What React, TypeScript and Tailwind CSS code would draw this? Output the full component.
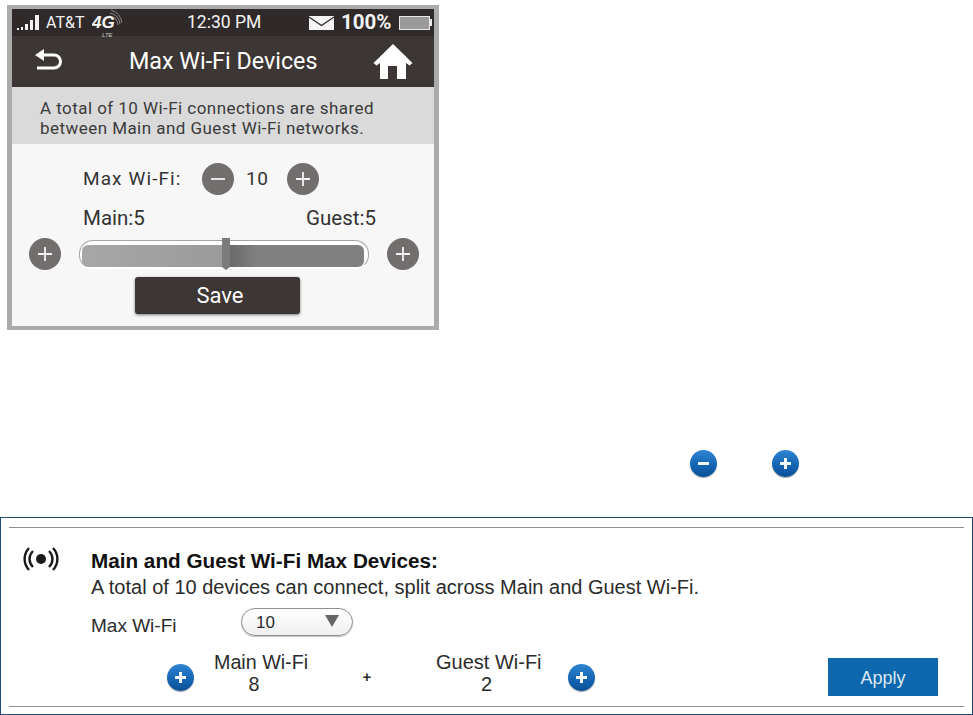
import React from 'react';

function RoundButton({ minus = false }: { minus?: boolean }) {
  return (
    <span className="flex h-[32px] w-[32px] shrink-0 items-center justify-center rounded-full bg-[#716e6d]">
      <svg width="16" height="16" viewBox="0 0 16 16">
        <path d={minus ? 'M1 8h14' : 'M1 8h14M8 1v14'} stroke="#f4f4f4" strokeWidth="1.8" fill="none" />
      </svg>
    </span>
  );
}

function BlueButton({ minus = false }: { minus?: boolean }) {
  return (
    <span className="flex h-[27px] w-[27px] shrink-0 items-center justify-center rounded-full bg-[linear-gradient(180deg,#2f86d3_0%,#1565b4_55%,#0b4f96_100%)] shadow-[0_1px_1px_rgba(0,0,0,0.35)]">
      <svg width="13" height="13" viewBox="0 0 13 13">
        <path d={minus ? 'M1 6.5h11' : 'M1 6.5h11M6.5 1v11'} stroke="#f2f7fc" strokeWidth="3" fill="none" />
      </svg>
    </span>
  );
}

function StatusBar() {
  return (
    <div className="flex h-[27px] items-center bg-[#2f2a29] pl-[5px] font-['Roboto',sans-serif] text-[#f2f2f2]">
      {/* signal */}
      <svg width="24" height="18" viewBox="0 0 24 18" className="shrink-0">
        <rect x="0" y="14" width="2" height="2" fill="#f2f2f2" />
        <rect x="4" y="13" width="2" height="3" fill="#f2f2f2" />
        <rect x="8" y="10" width="3" height="6" fill="#f2f2f2" />
        <rect x="13" y="6" width="3" height="10" fill="#f2f2f2" />
        <rect x="18" y="1" width="4" height="15" fill="#f2f2f2" />
      </svg>
      <span className="ml-[5px] w-[46px] shrink-0 text-[16px] leading-none">AT&amp;T</span>
      {/* 4G LTE */}
      <svg width="30" height="28" viewBox="0 0 30 28" className="shrink-0">
        <path d="M17 7a9 9 0 0 1 9 9M18 4a12 12 0 0 1 10 11M19 1a15 15 0 0 1 11 13" stroke="#8a8685" strokeWidth="1" fill="none" />
        <text x="0" y="19" fontFamily="Liberation Sans" fontWeight="700" fontStyle="italic" fontSize="17" fill="#f5f5f5">4G</text>
        <text x="10" y="28" fontFamily="Liberation Sans" fontStyle="italic" fontSize="6" fill="#d0d0d0">LTE</text>
      </svg>
      <span className="ml-[65px] w-[122px] shrink-0 text-[17.500px] leading-none">12:30 PM</span>
      <svg width="25" height="14" viewBox="0 0 25 14" className="shrink-0">
        <rect width="25" height="14" fill="#f5f5f5" />
        <path d="M0 1l12.500 8.500L25 1" stroke="#2f2a29" strokeWidth="1.300" fill="none" />
      </svg>
      <span className="ml-[7px] w-[58px] shrink-0 text-[20.500px] leading-none font-bold">100%</span>
      <span className="flex h-[14px] w-[31px] shrink-0 border border-[#e8e8e8] bg-[#9a9a9a]" />
      <span className="h-[7px] w-[2px] bg-[#e8e8e8]" />
    </div>
  );
}

function TitleBar() {
  return (
    <div className="flex h-[51px] items-center bg-[#3c3634] font-['Roboto',sans-serif] text-white">
      <svg width="30" height="26" viewBox="0 0 30 26" className="ml-[21px] shrink-0">
        <path d="M8 6h13a6.500 6.500 0 0 1 0 13H4" stroke="#fff" strokeWidth="3" fill="none" />
        <path d="M11 0v12L2 6z" fill="#fff" />
      </svg>
      <span className="ml-[66px] w-[244px] shrink-0 text-[23.300px] leading-none">Max Wi-Fi Devices</span>
      <svg width="40" height="36" viewBox="0 0 40 36" className="shrink-0">
        <path d="M20 0L39.500 19l-3 2.500L33 19v16H24V22h-9v13H7V19l-3.500 2.500-3-2.500z" fill="#fff" />
      </svg>
    </div>
  );
}

function Slider() {
  return (
    <div className="relative ml-[18px] flex h-[29px] w-[290px] items-center rounded-[14px] border border-[#a5a5a5] border-b-transparent bg-white pl-[2px]">
      <div className="mt-[4px] flex h-[22px] w-[282px] overflow-hidden rounded-[6px]">
        <div className="w-[145px] bg-[linear-gradient(90deg,#a6a7a6,#999a99)]" />
        <div className="flex-1 bg-[linear-gradient(90deg,#686868,#808080_22%)]" />
      </div>
      <svg width="8" height="32" viewBox="0 0 8 32" className="absolute left-[142px] top-[-3px]">
        <path d="M0 0h8v29l-4 3-4-3z" fill="#7b7b7b" />
      </svg>
    </div>
  );
}

function Phone() {
  return (
    <div className="ml-[7px] mt-[5px] h-[325px] w-[432px] border-x-[5px] border-y-[4px] border-x-[#ababab] border-y-[#ababab] bg-[#f7f7f7] font-['Roboto',sans-serif] text-[#333]">
      <StatusBar />
      <TitleBar />
      <div className="h-[57px] bg-[#dadada] pl-[28px] pt-[11px] text-[17px] leading-[20px] tracking-[0.45px] text-[#3a3a3a]">
        <div>A total of 10 Wi-Fi connections are shared</div>
        <div>between Main and Guest Wi-Fi networks.</div>
      </div>
      <div className="flex h-[181px] flex-col">
        <div className="ml-[71px] mt-[19px] flex h-[32px] items-center text-[19px] tracking-[1.1px]">
          <span className="w-[119px]">Max Wi-Fi:</span>
          <RoundButton minus />
          <span className="w-[53px] pl-[12px] tracking-[0.6px]">10</span>
          <RoundButton />
        </div>
        <div className="ml-[71px] mt-[11px] flex w-[293px] justify-between text-[20.500px] leading-[24px]">
          <span>Main:5</span>
          <span>Guest:5</span>
        </div>
        <div className="ml-[17px] mt-[8px] flex h-[32px] items-center">
          <RoundButton />
          <Slider />
          <span className="ml-[18px]">
            <RoundButton />
          </span>
        </div>
        <button className="ml-[123px] mt-[7px] h-[37px] w-[165px] rounded-[3px] bg-[#3c3634] pl-[5px] text-[22px] text-white shadow-[0_1px_3px_rgba(0,0,0,0.5)]">
          Save
        </button>
      </div>
    </div>
  );
}

function Panel() {
  return (
    <div className="mt-[40px] h-[198px] w-[973px] border-[1.500px] border-[#1f4a75] bg-white px-[8px] pt-[9px] font-['Liberation_Sans',sans-serif] text-[#2b2b2b]">
      <div className="h-[180px] border-y border-y-[#8d8d8d]">
        <div className="flex pt-[19px]">
          <svg width="38" height="26" viewBox="0 0 38 26" className="ml-[13px] shrink-0">
            <circle cx="19" cy="12" r="5" fill="#1a1a1a" />
            <path d="M11 4a11 11 0 0 0 0 16M27 4a11 11 0 0 1 0 16M7 1a16 16 0 0 0 0 22M31 1a16 16 0 0 1 0 22" stroke="#1a1a1a" strokeWidth="2.400" fill="none" />
          </svg>
          <div className="ml-[31px] pt-[3px]">
            <div className="text-[20.700px] leading-[22px] font-bold text-[#111]">Main and Guest Wi-Fi Max Devices:</div>
            <div className="mt-[4px] text-[20px] leading-[22px]">A total of 10 devices can connect, split across Main and Guest Wi-Fi.</div>
          </div>
        </div>
        <div className="ml-[82px] mt-[9px] flex items-center">
          <span className="w-[150px] pt-[8px] text-[19px] leading-[22px]">Max Wi-Fi</span>
          <div className="flex h-[28px] w-[112px] items-center justify-between rounded-[14px] border border-[#8f8f8f] bg-[linear-gradient(180deg,#fff,#f0f0f0)] pl-[14px] pr-[13px] pt-[2px] text-[17px] shadow-[0_1px_1px_rgba(0,0,0,0.25)]">
            <span>10</span>
            <svg width="14" height="12" viewBox="0 0 14 12" className="mb-[4px]">
              <path d="M0 0h14L7 12z" fill="#666" />
            </svg>
          </div>
        </div>
        <div className="ml-[158px] mt-[21px] flex h-[38px] items-center">
          <BlueButton />
          <div className="-mt-[8px] ml-[20px] w-[94px] text-center text-[19.700px] leading-[22px]">
            <div className="whitespace-nowrap">Main Wi-Fi</div>
            <div className="pr-[14px]">8</div>
          </div>
          <span className="w-[128px] pr-[10px] text-center text-[15px] font-bold">+</span>
          <div className="-mt-[8px] w-[105px] text-center text-[20px] leading-[22px]">
            <div className="whitespace-nowrap">Guest Wi-Fi</div>
            <div className="pr-[4px]">2</div>
          </div>
          <span className="ml-[27px]">
            <BlueButton />
          </span>
          <button className="ml-[233px] h-[38px] w-[110px] bg-[#0f68ae] pt-[3px] text-[18px] text-[#dce8f2]">Apply</button>
        </div>
      </div>
    </div>
  );
}

export default function App() {
  return (
    <div className="h-[715px] w-[973px] overflow-hidden bg-white">
      <Phone />
      <div className="ml-[690px] mt-[120px] flex w-[109px] justify-between">
        <BlueButton minus />
        <BlueButton />
      </div>
      <Panel />
    </div>
  );
}
